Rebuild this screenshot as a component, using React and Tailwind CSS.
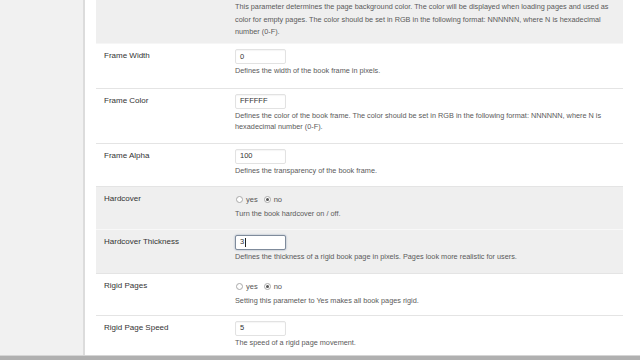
import React from 'react'

const rows = [
  {
    label: '',
    gray: true,
    top: true,
    desc: 'This parameter determines the page background color. The color will be displayed when loading pages and used as color for empty pages. The color should be set in RGB in the following format: NNNNNN, where N is hexadecimal number (0-F).',
  },
  { label: 'Frame Width', input: '0', pb: 'pb-[11px]', desc: 'Defines the width of the book frame in pixels.' },
  {
    label: 'Frame Color',
    input: 'FFFFFF',
    pb: 'pb-[10px]',
    desc: 'Defines the color of the book frame. The color should be set in RGB in the following format: NNNNNN, where N is hexadecimal number (0-F).',
  },
  { label: 'Frame Alpha', input: '100', pb: 'pb-[10px]', desc: 'Defines the transparency of the book frame.' },
  { label: 'Hardcover', radio: true, gray: true, split: true, pb: 'pb-[9px]', desc: 'Turn the book hardcover on / off.' },
  {
    label: 'Hardcover Thickness',
    input: '3',
    focused: true,
    gray: true,
    pb: 'pb-[11px]',
    desc: 'Defines the thickness of a rigid book page in pixels. Pages look more realistic for users.',
  },
  { label: 'Rigid Pages', radio: true, pb: 'pb-[8px]', desc: 'Setting this parameter to Yes makes all book pages rigid.' },
  { label: 'Rigid Page Speed', input: '5', last: true, pb: 'pb-[12px]', desc: 'The speed of a rigid page movement.' },
]

function Radio({ checked }) {
  return (
    <span className="w-[7px] h-[7px] rounded-full border border-[#a9a9a9] bg-white flex items-center justify-center">
      {checked && <span className="w-[3px] h-[3px] rounded-full bg-[#555]" />}
    </span>
  )
}

function Field({ row }) {
  if (row.radio) {
    return (
      <div className="flex items-center h-[15px] pl-[1px] text-[7.5px] text-[#555]">
        <Radio />
        <span className="ml-[3px] mr-[6px]">yes</span>
        <Radio checked />
        <span className="ml-[3px]">no</span>
      </div>
    )
  }
  return (
    <div
      className={
        'w-[51px] h-[15px] bg-white rounded-[2px] flex items-center pl-[4px] text-[7.5px] text-[#333] ' +
        (row.focused
          ? 'border border-[#7f8b9b] shadow-[0_0_2px_rgba(80,110,150,0.6)]'
          : 'border border-[#e2e2e2] shadow-[inset_0_1px_1px_rgba(0,0,0,0.04)]')
      }
    >
      {row.input}
      {row.focused && <span className="ml-[1px] w-[1px] h-[9px] bg-[#222]" />}
    </div>
  )
}

function Row({ row }) {
  if (row.top) {
    return (
      <div className="flex h-[44px] bg-[#efefef] border-b border-[#f6f6f6]">
        <div className="w-[139px] shrink-0" />
        <p className="w-[380px] pt-[1px] text-[7.3px] leading-[12.5px] text-[#5a5a5a]">{row.desc}</p>
      </div>
    )
  }
  return (
    <div
      className={
        'flex pt-[5px] ' +
        row.pb +
        (row.gray ? ' bg-[#efefef]' : ' bg-white') +
        (row.split ? ' border-b border-[#f8f8f8]' : row.last ? '' : ' border-b border-[#e4e4e4]')
      }
    >
      <div className="w-[139px] shrink-0 pl-[8px] pt-[1px] text-[8px] leading-[12px] text-[#333]">{row.label}</div>
      <div className="flex flex-col">
        <Field row={row} />
        <p className="w-[380px] mt-[1px] text-[7.3px] leading-[11.5px] text-[#5a5a5a]">{row.desc}</p>
      </div>
    </div>
  )
}

export default function App() {
  return (
    <div className="w-[640px] h-[360px] flex flex-col overflow-hidden bg-white font-['Liberation_Sans',Arial,sans-serif]">
      <div className="flex flex-1 min-h-0">
        <div className="w-[85px] shrink-0 bg-[#f1f1f1] border-r-2 border-[#dcdcdc]" />
        <div className="flex-1 pl-[11px] pr-[16px]">
          <div className="flex flex-col w-[527px]">
            {rows.map((row, i) => (
              <Row key={i} row={row} />
            ))}
          </div>
        </div>
      </div>
      <div className="h-[5px] shrink-0 bg-[#b0b0b0] border-t border-[#d5d5d5]" />
    </div>
  )
}
